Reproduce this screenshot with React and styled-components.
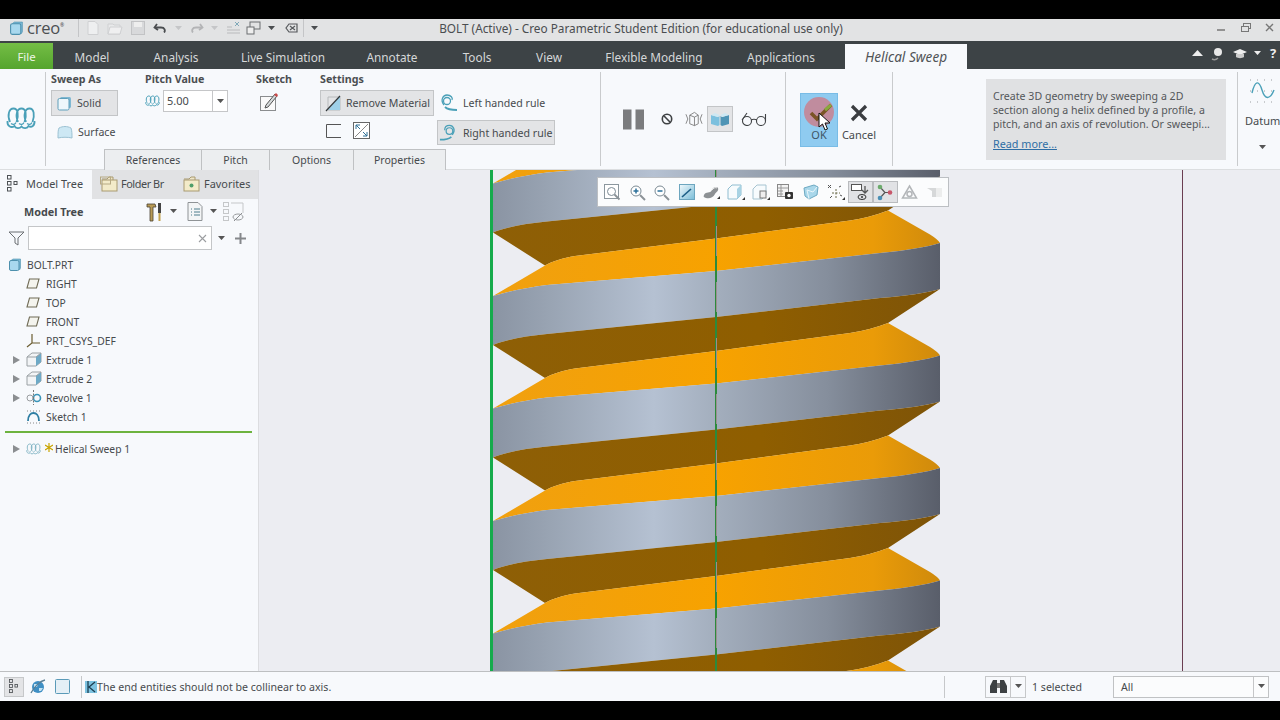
import React from 'react';
import styled, { createGlobalStyle } from 'styled-components';

const Global = createGlobalStyle`
  html, body { margin: 0; padding: 0; background: #000; }
  body { font-family: "Noto Sans", "Open Sans", sans-serif; font-size: 10.6px; color: #464a4d; }
  * { box-sizing: border-box; }
`;

const Screen = styled.div`width:1280px;height:720px;background:#000;padding-top:19px;display:flex;flex-direction:column;overflow:hidden;`;
const TitleBar = styled.div`height:22px;background:#e2e3e4;display:flex;align-items:center;position:relative;flex:none;padding-bottom:4px;`;
const Logo = styled.div`display:flex;align-items:center;gap:3px;width:79px;padding-left:9px;border-right:1px solid #c4c5c7;height:18px;`;
const LogoText = styled.span`font-family:"Open Sans",sans-serif;font-size:16.5px;color:#4b4f52;letter-spacing:-.2px;line-height:18px;`;
const LogoMark = styled.span`font-size:5px;align-self:flex-start;margin:3px 0 0 -3px;`;
const Qat = styled.div`display:flex;align-items:center;height:18px;`;
const QatSlot = styled.div`width:${p=>p.$w}px;display:flex;align-items:center;justify-content:center;`;
const QatEnd = styled.div`width:21px;height:18px;border-left:1px solid #c4c5c7;display:flex;align-items:center;justify-content:center;`;
const TitleText = styled.div`position:absolute;left:0;right:-2px;text-align:center;font-size:11.8px;color:#4a4d50;`;
const WinControls = styled.div`margin-left:auto;display:flex;align-items:center;gap:10px;padding-right:3px;`;

const TabBar = styled.div`height:28px;background:#3d4346;display:flex;flex:none;align-items:stretch;`;
const FileTab = styled.div`width:53px;margin-top:2px;padding-top:1px;background:linear-gradient(#74bd45,#55a52e);color:#eef6e6;display:flex;align-items:center;justify-content:center;font-size:11.4px;`;
const Tab = styled.div`width:${p=>p.$w}px;padding-top:3px;color:#d6d8d9;display:flex;align-items:center;justify-content:center;font-size:11.8px;`;
const ActiveTab = styled.div`width:122px;margin-left:8px;margin-top:3px;background:#f7f9fc;color:#505356;font-style:italic;font-size:13.6px;display:flex;align-items:center;justify-content:center;`;
const TabTools = styled.div`margin-left:auto;display:flex;align-items:center;gap:7px;padding:0 0 4px;color:#e6e7e8;`;
const Help = styled.span`font-weight:700;font-size:13px;color:#eee;width:10px;margin-left:2px;`;

const Ribbon = styled.div`height:101px;background:#f7f9fc;display:flex;flex:none;border-bottom:1px solid #dcdee0;`;
const RibbonSection = styled.div`width:${p=>p.$w}px;flex:none;display:flex;margin:3px 0;${p=>p.$end?'':'border-right:1px solid #c9cbcd;'}`;
const LeadIcon = styled.div`width:45px;display:flex;align-items:center;justify-content:center;padding:0 3px 0 0;margin-top:-2px;`;
const MainColumn = styled.div`flex:1;display:flex;flex-direction:column;`;
const Groups = styled.div`height:77px;flex:none;display:flex;padding-left:5px;`;
const Group = styled.div`width:${p=>p.$w}px;flex:none;display:flex;flex-direction:column;`;
const GroupTitle = styled.div`height:18px;font-weight:700;font-size:10.7px;color:#4b4e51;line-height:14px;white-space:nowrap;`;
const OptionBtn = styled.div`height:26px;width:${p=>p.$w}px;display:flex;align-items:center;white-space:nowrap;gap:${p=>p.$gap||5}px;padding-left:${p=>p.$pad||5}px;${p=>p.$on?'background:#e3e4e6;border:1px solid #c3c5c7;':'border:1px solid transparent;'}`;
const PlainOption = styled(OptionBtn)`margin-top:3px;`;
const PitchRow = styled.div`display:flex;align-items:center;margin-top:0;gap:3px;`;
const PitchBox = styled.div`width:65px;height:22px;background:#fff;border:1px solid #c5c6c8;display:flex;`;
const PitchValue = styled.div`flex:1;padding-left:3px;line-height:19px;font-size:11px;`;
const Caret = styled.div`width:15px;border-left:1px solid #c5c6c8;display:flex;align-items:center;justify-content:center;`;
const SketchSlot = styled.div`height:24px;padding-left:3px;display:flex;align-items:center;`;
const SmallRow = styled.div`display:flex;gap:12px;padding:6px 0 0 6px;align-items:center;`;
const HandedColumn = styled.div`padding-top:18px;display:flex;flex-direction:column;gap:5px;`;
const HandedOption = styled.div`height:25px;width:118px;display:flex;align-items:center;gap:5px;padding-left:1px;white-space:nowrap;${p=>p.$on?'background:#e3e4e6;border:1px solid #c3c5c7;':'border:1px solid transparent;'}`;
const SubTabs = styled.div`display:flex;flex:none;margin-left:58px;height:21px;`;
const SubTab = styled.div`width:${p=>p.$w}px;background:#eceef0;border:1px solid #bfc1c3;border-bottom:0;border-right-width:${p=>p.$last?1:0}px;display:flex;align-items:center;justify-content:center;font-size:10.5px;`;

const ControlRow = styled.div`display:flex;align-items:center;height:100%;padding:0 0 0 22px;`;
const ControlSlot = styled.div`width:${p=>p.$w}px;margin-left:${p=>p.$ml||0}px;height:26px;display:flex;align-items:center;justify-content:center;${p=>p.$on?'background:#e3e4e6;border:1px solid #c3c5c7;':''}`;
const ActionArea = styled.div`display:flex;align-items:center;padding-left:14px;gap:1px;height:100%;margin-top:1px;`;
const OkButton = styled.div`width:38px;height:54px;background:#8fcbf0;border:1px solid #79bce6;display:flex;flex-direction:column;align-items:center;padding-top:2px;position:relative;color:#3e5666;`;
const CancelButton = styled.div`width:40px;height:54px;display:flex;flex-direction:column;align-items:center;padding-top:11px;`;
const ActionLabel = styled.div`font-size:11px;line-height:16px;margin-top:${p=>p.$m}px;`;
const CursorMark = styled.div`position:absolute;left:17px;top:18px;line-height:0;`;
const InfoBox = styled.div`margin:7px 0 0 93px;width:240px;height:81px;background:#e0e1e3;padding:10px 7px 0;font-size:10.6px;line-height:14.2px;color:#54575a;`;
const ReadMore = styled.a`display:block;margin-top:5px;color:#2f6ea5;text-decoration:underline;font-size:10.8px;`;
const DatumBlock = styled.div`flex:1;display:flex;flex-direction:column;align-items:center;padding-top:6px;`;
const DatumArt = styled.div`padding-left:7px;line-height:0;`;
const DatumLabel = styled.div`margin-top:9px;padding-left:7px;font-size:11px;`;
const DatumCaret = styled.div`margin-top:17px;padding-left:6px;line-height:0;`;

const Body = styled.div`flex:1;display:flex;min-height:0;`;
const LeftPanel = styled.div`width:259px;flex:none;background:#f7f9fc;border-right:1px solid #dcdde0;display:flex;flex-direction:column;`;
const PanelTabs = styled.div`height:29px;background:#e1e2e4;display:flex;flex:none;font-size:10.9px;`;
const PanelTab = styled.div`width:${p=>p.$w}px;display:flex;align-items:center;padding-bottom:2px;gap:${p=>p.$gap||4}px;padding-left:${p=>p.$pad}px;white-space:nowrap;${p=>p.$on?'background:#f7f9fc;':''}`;
const TightLabel = styled.span`letter-spacing:-.45px;`;
const TreeHeader = styled.div`height:27px;display:flex;align-items:center;padding:0 0 2px 24px;flex:none;`;
const TreeTitle = styled.div`font-weight:700;width:122px;font-size:10.8px;`;
const HeaderTool = styled.div`display:flex;align-items:center;gap:7px;width:${p=>p.$w}px;`;
const FilterRow = styled.div`display:flex;align-items:center;height:24px;padding-left:8px;flex:none;`;
const FilterInput = styled.div`width:184px;height:24px;margin-left:3px;background:#fff;border:1px solid #c4c6c8;display:flex;align-items:center;justify-content:flex-end;padding-right:4px;`;
const FilterTail = styled.div`display:flex;align-items:center;gap:10px;margin-left:6px;`;
const Tree = styled.div`padding-top:5px;display:flex;flex-direction:column;`;
const TreeRow = styled.div`height:19px;display:flex;align-items:center;font-size:10.3px;padding-left:${p=>p.$root?8:12}px;`;
const Expander = styled.div`width:14px;line-height:0;`;
const RowIcon = styled.div`width:${p=>p.$w||20}px;display:flex;align-items:center;margin-right:${p=>p.$m??0}px;`;
const NewMark = styled.div`width:10px;line-height:0;margin-top:-3px;`;
const Rule = styled.div`height:2px;background:#6db33f;margin:5px 6px 6px 5px;`;

const Viewport = styled.div`flex:1;position:relative;overflow:hidden;background:#ecedf2;`;
const ViewTools = styled.div`position:absolute;left:338px;top:7px;width:352px;height:30px;background:#fbfcfd;border:1px solid #bcbfc3;display:flex;align-items:center;padding-left:2px;`;
const ViewTool = styled.div`width:24.8px;height:22px;display:flex;align-items:center;justify-content:center;${p=>p.$on?'background:#e1e2e5;border:1px solid #b9bbbe;':''}`;

const StatusBar = styled.div`height:30px;flex:none;background:#f7f9fc;border-top:1px solid #bdbfc1;display:flex;align-items:center;`;
const StatusToggle = styled.div`width:20px;height:20px;margin-left:4px;background:#e3e4e6;border:1px solid #c6c8ca;display:flex;align-items:center;justify-content:center;`;
const StatusIcon = styled.div`width:24px;display:flex;justify-content:center;margin-left:${p=>p.$m||0}px;`;
const Message = styled.div`margin-left:7px;padding-left:3px;height:22px;width:864px;border-left:1px solid #c6c8ca;border-right:1px solid #c6c8ca;display:flex;align-items:center;gap:0;`;
const FindGroup = styled.div`width:41px;height:22px;margin-left:40px;display:flex;border:1px solid #c6c8ca;`;
const FindIcon = styled.div`flex:1;display:flex;align-items:center;justify-content:center;`;
const SelectedText = styled.div`width:81px;margin-left:6px;`;
const FilterSelect = styled.div`width:156px;height:22px;border:1px solid #c0c2c4;display:flex;background:#fbfcfd;`;
const FilterValue = styled.div`flex:1;padding-left:7px;line-height:20px;`;
const BottomBlack = styled.div`height:19px;flex:none;background:#000;`;

const C = ({c='#555',s=7})=> <svg width={s} height={s*.6} viewBox="0 0 7 4"><path d="M0 0h7L3.5 4z" fill={c}/></svg>;
const Cube = ({s=14,fill='#a8d8ee',stroke='#4d90ad'})=> <svg width={s} height={s} viewBox="0 0 14 14"><path d="M3 2.500 L5 1h7.500v9l-1 2" fill="#7cb9d6" stroke={stroke} strokeWidth=".6"/><rect x="1.500" y="2.500" width="9.500" height="10" rx="1.500" fill={fill} stroke={stroke}/></svg>;
const Helix = ({w=30,h=23,c='#4aa0b8',sw=1.800})=> <svg width={w} height={h} viewBox="0 0 30 23" fill="none" stroke={c} strokeWidth={sw}><path d="M4 15C1 8 3 1.500 7.500 1.500S13 8 10.500 15M12 15C9 8 11 1.500 15.500 1.500S21 8 18.500 15M20 15C17 8 19 1.500 23.500 1.500S29 8 26.500 15"/><path d="M1.500 14c-.5 5 3.500 7.500 7 5 1 2.500 5 3 7 .5 2 2.500 6 2 7-.5 3 2 6.500-.5 6-5"/><path d="M5 16.500c2 1.500 4 1 5-1M13 16.500c2 1.500 4 1 5-1M21 16.500c2 1.500 4 1 5-1" strokeWidth={sw*.7}/></svg>;
const Plane = ()=> <svg width="14" height="11" viewBox="0 0 14 11"><path d="M3.500 1h9.500L10.500 10H1z" fill="#f4f4ee" stroke="#6f6a55" strokeWidth="1.100"/></svg>;
const Extrude = ()=> <svg width="16" height="15" viewBox="0 0 16 15"><path d="M1 5l5-4h9v9l-5 4H1z" fill="#f2f4f6" stroke="#9aa0a4"/><path d="M10 5l5-4v9l-5 4z" fill="#6ea9c6"/><path d="M1 5h9M10 5l5-4" stroke="#9aa0a4" fill="none"/></svg>;
const Arrow = ()=> <svg width="9" height="10" viewBox="0 0 9 10"><path d="M1 1l7 4-7 4z" fill="#8b8e91"/></svg>;
const NodeTree = ({s=1})=> <svg width={11*s} height={17*s} viewBox="0 0 11 17" fill="none" stroke="#4d5154"><rect x=".5" y=".5" width="3.500" height="3.500"/><rect x=".5" y="6.500" width="3.500" height="3.500"/><rect x=".5" y="12.500" width="3.500" height="3.500"/><rect x="7" y="6.500" width="3" height="3"/></svg>;
const Mag = ({sign})=> <svg width="17" height="17" viewBox="0 0 17 17" fill="none"><circle cx="7" cy="7" r="5" stroke="#7b8a94" fill="#fff"/><path d="M11 11l5 5" stroke="#8b9297" strokeWidth="2"/>{sign && <path d="M4.500 7h5" stroke="#2a6f9a" strokeWidth="1.500"/>}{sign==='+' && <path d="M7 4.500v5" stroke="#2a6f9a" strokeWidth="1.500"/>}</svg>;
const Folder = ({star})=> <svg width="18" height="17" viewBox="0 0 18 17"><path d="M2 4h5l2-2h4v3" fill="#efe6c8" stroke="#a99a70"/><rect x="2" y="5" width="15" height="11" fill="#f3ebc9" stroke="#a99a70"/>{star && <circle cx="9.500" cy="10.500" r="2" fill="#4f9e6a"/>}{!star && <rect x="0.500" y="2" width="10" height="7" fill="none" stroke="#b7aa84"/>}</svg>;

const band = (k) => {
  const T = `translate(0 ${112.5*k})`;
  return <g key={k} transform={T}>
    <path fill="url(#darkG)" d="M493 232.500C505 227.500 525 223.500 547 221.500L716 204.500L880 185.500Q920 182.500 940 176.500L888 210.500Q870 217.500 850 220.500L716 238.500L575 256C563 258 552 261.500 545 265.500Z"/>
    <path fill="url(#orangeG)" d="M545 265.500C552 261.500 563 258 575 256L716 238.500L850 220.500Q870 217.500 888 210.500L930 234.500Q938 239.500 940 243Q920 249 880 253L716 271L547 285C530 287 510 291 493 296Z"/>
    <path fill="url(#greyG)" d="M493 296C510 291 530 287 547 285L716 271L880 253Q920 249 940 243L940 289Q920 295 880 298L716 317L547 334C525 336 505 340 493 345Z"/>
  </g>;
};

const viewIcons = [
  <svg width="17" height="17" viewBox="0 0 17 17" fill="none"><rect x=".5" y=".5" width="14" height="14" stroke="#8b979e" fill="#fff"/><circle cx="7.500" cy="7.500" r="4" stroke="#7b8a94"/><path d="M10.500 10.500l5 5" stroke="#8b9297" strokeWidth="1.800"/></svg>,
  <Mag sign="+"/>, <Mag sign="-"/>,
  <svg width="16" height="16" viewBox="0 0 16 16"><defs><linearGradient id="rf" x1="0" y1="0" x2="1" y2="1"><stop offset="0" stopColor="#f2f9fc"/><stop offset="1" stopColor="#79bdd8"/></linearGradient></defs><rect x=".5" y=".5" width="15" height="15" fill="url(#rf)" stroke="#6da6bf"/><path d="M3 13l9-8" stroke="#1d5f86" strokeWidth="1.600"/></svg>,
  <svg width="17" height="16" viewBox="0 0 17 16"><path d="M1 11c2-4 6-1 8-5 1-3 5-4 6-2 1 3-2 4-3 6-2 4-6 5-9 4-2-1-3-1-2-3z" fill="#8d9194"/><path d="M9 6c1-2 4-3 5-2" stroke="#eee" fill="none"/><path d="M14 15h3v-3z" fill="#333"/></svg>,
  <svg width="18" height="17" viewBox="0 0 18 17"><path d="M1 5l4-4h9v10l-4 4H1z" fill="#f7fbfd" stroke="#8fbdd0"/><path d="M10 5l4-4v10l-4 4z" fill="#a8d3e4"/><path d="M15 16h3v-3z" fill="#333"/></svg>,
  <svg width="18" height="17" viewBox="0 0 18 17"><path d="M1 5l4-4h9v10l-4 4H1z" fill="#f7fbfd" stroke="#a6c4d1"/><rect x="8" y="7" width="6" height="7" fill="#eee" stroke="#777"/><path d="M15 16h3v-3z" fill="#333"/></svg>,
  <svg width="17" height="16" viewBox="0 0 17 16"><rect x=".5" y=".5" width="11" height="12" fill="#f3f3f3" stroke="#888"/><path d="M1 4h10M1 7h5M1 10h5M4 1v11" stroke="#999"/><rect x="8" y="8" width="8" height="7" rx="1" fill="#333"/><circle cx="12" cy="11.500" r="1.700" fill="#fff"/></svg>,
  <svg width="16" height="16" viewBox="0 0 16 16"><path d="M1 4l10-3 4 2-1 8-8 4-4-3z" fill="#a9d7ea" stroke="#6da9c2"/><path d="M4 6l6 2 4-5M6 15l-2-9" stroke="#e9f6fb" fill="none"/></svg>,
  <svg width="18" height="17" viewBox="0 0 18 17" fill="none" stroke="#555"><path d="M1 1l3 3M4 1L1 4" /><path d="M9 5v9M5 9h8" strokeDasharray="2 1.500" stroke="#6a6a4a"/><path d="M3 14l2-2M12 3l2-1M13 11l2 1" /><path d="M15 16h3v-3z" fill="#333" stroke="none"/></svg>,
  <svg width="18" height="18" viewBox="0 0 18 18" fill="none"><rect x=".5" y="1.500" width="10" height="6" fill="#fff" stroke="#555"/><path d="M14 3v6M11 7l3 3 3-3" stroke="#555" strokeWidth="1.300"/><ellipse cx="11" cy="14" rx="4" ry="2.500" stroke="#333"/><circle cx="11" cy="14" r="1" fill="#333"/></svg>,
  <svg width="16" height="17" viewBox="0 0 16 17" fill="none"><path d="M3 3l5 5.500-5 5.500M8 8.500h5" stroke="#555" strokeWidth="1.200"/><circle cx="3" cy="3" r="2.300" fill="#6cab6c"/><circle cx="13" cy="8.500" r="2.300" fill="#c7566a"/><circle cx="3" cy="14" r="2.300" fill="#4a8fb5"/></svg>,
  <svg width="17" height="16" viewBox="0 0 17 16" fill="none" stroke="#b3b6b9" strokeWidth="1.500"><path d="M8.500 2L15.500 14h-14z"/><circle cx="8.500" cy="10" r="2.500"/></svg>,
  <svg width="16" height="12" viewBox="0 0 16 12"><path d="M0 2h15v9H5V5z" fill="#d6d8d9"/><path d="M9 2h6v9H9z" fill="#eceded"/></svg>,
];

export default function App() {
  return (
    <Screen>
      <Global/>
      <TitleBar>
        <Logo>
          <Cube s={15}/>
          <LogoText>creo</LogoText>
          <LogoMark>®</LogoMark>
        </Logo>
        <Qat>
          <QatSlot $w={28}><svg width="12" height="14" viewBox="0 0 12 14"><path d="M1 .5h7l3 3v10H1z" fill="#eeeff0" stroke="#cfd0d2"/></svg></QatSlot>
          <QatSlot $w={16}><svg width="16" height="14" viewBox="0 0 16 14"><path d="M1 3h5l1 1h6v9H1z" fill="#e8e9ea" stroke="#cfd0d2"/><path d="M3 6h12l-2 7H1z" fill="#efeff0" stroke="#cfd0d2"/></svg></QatSlot>
          <QatSlot $w={30}><svg width="14" height="14" viewBox="0 0 14 14"><rect x=".5" y=".5" width="13" height="13" fill="#d8d9db" stroke="#c2c3c5"/><rect x="3" y="1" width="8" height="5" fill="#eee"/></svg></QatSlot>
          <QatSlot $w={14}><svg width="14" height="10" viewBox="0 0 14 10" fill="none" stroke="#4a4d50" strokeWidth="1.800"><path d="M4 1L1.500 4.500 5 7"/><path d="M2 4.500h6c4 0 4.500 3.500 3 5"/></svg></QatSlot>
          <QatSlot $w={22}><C c="#c5c6c8"/></QatSlot>
          <QatSlot $w={16}><svg width="14" height="10" viewBox="0 0 14 10" fill="none" stroke="#b3b4b6" strokeWidth="1.800"><path d="M10 1l2.500 3.500L9 7"/><path d="M12 4.500H6C2 4.500 1.500 8 3 9.500"/></svg></QatSlot>
          <QatSlot $w={18}><C c="#c5c6c8"/></QatSlot>
          <QatSlot $w={20}><svg width="15" height="14" viewBox="0 0 15 14" fill="none" stroke="#b9babc"><path d="M1 6h5M1 9h13M1 12h13"/><path d="M9 1l4 4M13 1l-4 4" stroke="#7fa8b8"/></svg></QatSlot>
          <QatSlot $w={20}><svg width="15" height="14" viewBox="0 0 15 14" fill="none" stroke="#6b6e70"><rect x="4" y="1" width="10" height="7"/><rect x="1" y="6" width="7" height="7" fill="#eee"/></svg></QatSlot>
          <QatSlot $w={16}><C c="#4a4d50"/></QatSlot>
          <QatSlot $w={24}><svg width="13" height="10" viewBox="0 0 13 10" fill="none" stroke="#56595c" strokeWidth="1.200"><path d="M4 1L1 5l3 4h8V1zM5 3l5 4M10 3L5 7"/></svg></QatSlot>
          <QatEnd><C c="#4a4d50"/></QatEnd>
        </Qat>
        <TitleText>BOLT (Active) - Creo Parametric Student Edition (for educational use only)</TitleText>
        <WinControls>
          <svg width="14" height="14" viewBox="0 0 14 14"><path d="M2 9h8" stroke="#777" strokeWidth="1.500"/></svg>
          <svg width="14" height="14" viewBox="0 0 14 14" fill="none" stroke="#777"><rect x="4.500" y="2.500" width="7" height="5"/><rect x="2.500" y="5.500" width="7" height="5" fill="#e2e3e4"/></svg>
          <svg width="14" height="14" viewBox="0 0 14 14" fill="none" stroke="#777" strokeWidth="1.400"><path d="M3 3l7 7M10 3l-7 7"/></svg>
        </WinControls>
      </TitleBar>

      <TabBar>
        <FileTab>File</FileTab>
        <Tab $w={78}>Model</Tab>
        <Tab $w={90}>Analysis</Tab>
        <Tab $w={124}>Live Simulation</Tab>
        <Tab $w={94}>Annotate</Tab>
        <Tab $w={76}>Tools</Tab>
        <Tab $w={68}>View</Tab>
        <Tab $w={142}>Flexible Modeling</Tab>
        <Tab $w={112}>Applications</Tab>
        <ActiveTab>Helical Sweep</ActiveTab>
        <TabTools>
          <svg width="11" height="7" viewBox="0 0 11 7"><path d="M5.500 0L11 6H0z" fill="#eee"/></svg>
          <svg width="16" height="15" viewBox="0 0 16 15"><circle cx="8" cy="6" r="4" fill="#e8e8e8"/><path d="M2 13c2 1 4 1 6-1" stroke="#999" fill="none" strokeWidth="1.500"/></svg>
          <svg width="14" height="11" viewBox="0 0 14 11"><path d="M7 1l7 3-7 3-7-3z" fill="#eee"/><path d="M3 6v3c2 1.500 6 1.500 8 0V6z" fill="#ccc"/></svg>
          <C c="#eee"/>
          <Help>?</Help>
        </TabTools>
      </TabBar>

      <Ribbon>
        <RibbonSection $w={46}>
          <LeadIcon><Helix/></LeadIcon>
        </RibbonSection>
        <RibbonSection $w={555}>
          <MainColumn>
            <Groups>
              <Group $w={94}>
                <GroupTitle>Sweep As</GroupTitle>
                <OptionBtn $on $w={67}>
                  <svg width="15" height="15" viewBox="0 0 15 15"><rect x="3" y="1" width="11" height="11" rx="1.500" fill="#7fb8d2"/><rect x="1" y="2.500" width="11" height="11.500" rx="1.500" fill="#eef7fb" stroke="#5f9fbb"/></svg>
                  <span>Solid</span>
                </OptionBtn>
                <PlainOption $w={90}>
                  <svg width="16" height="14" viewBox="0 0 16 14"><path d="M1 13c0-5 0-8 1-10 4-2 8-2 12 0 1 3 1 6 1 10-4-1-10-1-14 0z" fill="#cde8f4" stroke="#9cc2d3"/></svg>
                  <span>Surface</span>
                </PlainOption>
              </Group>
              <Group $w={111}>
                <GroupTitle>Pitch Value</GroupTitle>
                <PitchRow>
                  <Helix w={15} h={12} sw={2}/>
                  <PitchBox>
                    <PitchValue>5.00</PitchValue>
                    <Caret><C/></Caret>
                  </PitchBox>
                </PitchRow>
              </Group>
              <Group $w={64}>
                <GroupTitle>Sketch</GroupTitle>
                <SketchSlot>
                  <svg width="20" height="20" viewBox="0 0 20 20"><rect x="1.500" y="4.500" width="15" height="14" fill="#fafafa" stroke="#8b8d8f"/><path d="M7 13L16 2l2 2-9 11-3 1z" fill="#d6dadb" stroke="#555"/><path d="M15 3l2-2 2 2-1 2z" fill="#c94a4a"/></svg>
                </SketchSlot>
              </Group>
              <Group $w={117}>
                <GroupTitle>Settings</GroupTitle>
                <OptionBtn $on $w={114} $pad={4} $gap={3}>
                  <svg width="18" height="18" viewBox="0 0 18 18"><path d="M3 3h12v13H3z" fill="none" stroke="#b7babc"/><path d="M3 16L15 2v14z" fill="#9ed0e8"/><path d="M1 17L15 2" stroke="#33383b" strokeWidth="1.200"/></svg>
                  <span>Remove Material</span>
                </OptionBtn>
                <SmallRow>
                  <svg width="15" height="14" viewBox="0 0 15 14" fill="none" stroke="#555"><path d="M15 .5H.5v13H15"/></svg>
                  <svg width="17" height="17" viewBox="0 0 17 17" fill="none"><rect x=".5" y=".5" width="16" height="16" stroke="#666" fill="#fff"/><path d="M2 15L15 2" stroke="#888"/><path d="M3 3h4M3 3v4M3 3l4 4M14 14h-4M14 14v-4M14 14l-4-4" stroke="#2f6f95"/></svg>
                </SmallRow>
              </Group>
              <HandedColumn>
                <HandedOption>
                  <svg width="19" height="19" viewBox="0 0 19 19" fill="none" stroke="#4aa0b8" strokeWidth="1.300"><path d="M5 12C1 7 4 2 8 2s6 3 5 5"/><circle cx="8" cy="8" r="3.500"/><path d="M6 14c3 3 7 3 12 3" strokeWidth="1.800"/></svg>
                  <span>Left handed rule</span>
                </HandedOption>
                <HandedOption $on>
                  <svg width="19" height="19" viewBox="0 0 20 19" fill="none" stroke="#4aa0b8" strokeWidth="1.300"><path d="M14 12c4-5 1-10-3-10S6 4 6 7"/><circle cx="11" cy="8" r="3.500"/><path d="M13 14c-3 3-7 3-12 3" strokeWidth="1.800"/></svg>
                  <span>Right handed rule</span>
                </HandedOption>
              </HandedColumn>
            </Groups>
            <SubTabs>
              <SubTab $w={97}>References</SubTab>
              <SubTab $w={68}>Pitch</SubTab>
              <SubTab $w={84}>Options</SubTab>
              <SubTab $w={93} $last>Properties</SubTab>
            </SubTabs>
          </MainColumn>
        </RibbonSection>
        <RibbonSection $w={185}>
          <ControlRow>
            <ControlSlot $w={21}><svg width="21" height="21" viewBox="0 0 21 21"><rect width="8.500" height="20" y=".5" fill="#7b7c7e"/><rect x="12.500" y=".5" width="8.500" height="20" fill="#7b7c7e"/></svg></ControlSlot>
            <ControlSlot $w={36} $ml={5}><svg width="12" height="12" viewBox="0 0 12 12" fill="none" stroke="#3f4244" strokeWidth="1.600"><circle cx="6" cy="6" r="4.700"/><path d="M2.800 2.800l6.400 6.400"/></svg></ControlSlot>
            <ControlSlot $w={18}><svg width="19" height="16" viewBox="0 0 19 16" fill="none" stroke="#777" strokeWidth=".9"><path d="M5 4l5-3 4 3v9l-4 2-5-2zM5 4l5 2 4-2M10 6v9M1 3l2 5-2 5M18 3l-2 5 2 5"/></svg></ControlSlot>
            <ControlSlot $w={26} $ml={4} $on><svg width="18" height="13" viewBox="0 0 18 13"><path d="M0 2l7 2 1.500-1v9L7 13 0 11z" fill="#7cc0de"/><path d="M18 2l-7 2-1.500-1v9L11 13l7-2z" fill="#4f94b5"/><path d="M0 2l4-2 4.500 2L7 4zM18 2l-4-2-4.500 2L11 4z" fill="#cde8f3"/></svg></ControlSlot>
            <ControlSlot $w={41}><svg width="26" height="14" viewBox="0 0 26 14" fill="none" stroke="#3f4244" strokeWidth="1.100"><circle cx="6" cy="9" r="4.500"/><circle cx="20" cy="9" r="4.500"/><path d="M10 8c2-1 4-1 6 0M1 8L6 1M24.500 9V2"/></svg></ControlSlot>
          </ControlRow>
        </RibbonSection>
        <RibbonSection $w={107}>
          <ActionArea>
            <OkButton>
              <svg width="32" height="32" viewBox="0 0 32 32"><circle cx="16" cy="16" r="15" fill="#c08c9e"/><path d="M8 17l6 6L28 9" fill="none" stroke="#7a5426" strokeWidth="3.600"/><path d="M22 14l6-5" stroke="#8aa83c" strokeWidth="3"/></svg>
              <ActionLabel $m={-1}>OK</ActionLabel>
              <CursorMark>
                <svg width="14" height="20" viewBox="0 0 14 20"><path d="M1 1v14l3.500-3 2.500 6 2.500-1-2.500-6H12z" fill="#fff" stroke="#111"/></svg>
              </CursorMark>
            </OkButton>
            <CancelButton>
              <svg width="20" height="18" viewBox="0 0 20 18"><path d="M3 2l14 14M17 2L3 16" stroke="#3a3d40" strokeWidth="3.200"/></svg>
              <ActionLabel $m={5}>Cancel</ActionLabel>
            </CancelButton>
          </ActionArea>
        </RibbonSection>
        <RibbonSection $w={345}>
          <InfoBox>
            Create 3D geometry by sweeping a 2D<br/>
            section along a helix defined by a profile, a<br/>
            pitch, and an axis of revolution. Or sweepi...
            <ReadMore>Read more...</ReadMore>
          </InfoBox>
        </RibbonSection>
        <RibbonSection $w={42} $end>
          <DatumBlock>
            <DatumArt><svg width="30" height="26" viewBox="0 0 30 26" fill="none"><path d="M4 15C7 2 11 2 14 12s8 10 12 0" stroke="#4aa0b8" strokeWidth="1.400"/><path d="M2 2h26M2 24h26M2 13h26" stroke="#9a9da0" strokeDasharray="1 6"/></svg></DatumArt>
            <DatumLabel>Datum</DatumLabel>
            <DatumCaret><C/></DatumCaret>
          </DatumBlock>
        </RibbonSection>
      </Ribbon>

      <Body>
        <LeftPanel>
          <PanelTabs>
            <PanelTab $w={92} $on $pad={7} $gap={8}><NodeTree/><span>Model Tree</span></PanelTab>
            <PanelTab $w={79} $pad={8} $gap={3}><Folder/><TightLabel>Folder Br</TightLabel></PanelTab>
            <PanelTab $w={87} $pad={11} $gap={4}><Folder star/><span>Favorites</span></PanelTab>
          </PanelTabs>
          <TreeHeader>
            <TreeTitle>Model Tree</TreeTitle>
            <HeaderTool $w={41}>
              <svg width="17" height="20" viewBox="0 0 17 20"><path d="M1 2h8l1 3H7v14H4V5H1z" fill="#b89a55" stroke="#4a4234" strokeWidth=".8"/><rect x="12" y="1" width="3" height="10" fill="#444"/><rect x="12.500" y="11" width="2" height="8" fill="#c2a24c"/></svg>
              <C/>
            </HeaderTool>
            <HeaderTool $w={36}>
              <svg width="16" height="19" viewBox="0 0 16 19" fill="none"><path d="M1 .5h10l4 4v14H1z" fill="#f3f5f6" stroke="#8f9396"/><path d="M4 7h1M7 7h6M4 10h1M7 10h6M4 13h1M7 13h6" stroke="#4d7c8c"/></svg>
              <C/>
            </HeaderTool>
            <svg width="21" height="20" viewBox="0 0 21 20" fill="none" stroke="#c5c7c9"><rect x=".5" y=".5" width="5" height="4"/><rect x=".5" y="7.500" width="5" height="4"/><rect x=".5" y="14.500" width="5" height="4"/><path d="M8 1h12v10"/><ellipse cx="15" cy="15" rx="5" ry="3" stroke="#9a9da0"/><path d="M11 19l8-8" stroke="#8a8d90"/></svg>
          </TreeHeader>
          <FilterRow>
            <svg width="17" height="15" viewBox="0 0 17 15" fill="none" stroke="#6b6f72"><path d="M1 1h15l-6 6v7l-3-2V7z"/></svg>
            <FilterInput>
              <svg width="9" height="9" viewBox="0 0 9 9" stroke="#9b9da0" strokeWidth="1.100"><path d="M1 1l7 7M8 1L1 8"/></svg>
            </FilterInput>
            <FilterTail>
              <C c="#555"/>
              <svg width="11" height="11" viewBox="0 0 11 11"><path d="M5.500 0v11M0 5.500h11" stroke="#85888b" strokeWidth="2"/></svg>
            </FilterTail>
          </FilterRow>
          <Tree>
            <TreeRow $root><RowIcon $w={19}><Cube s={14}/></RowIcon>BOLT.PRT</TreeRow>
            <TreeRow><Expander/><RowIcon><Plane/></RowIcon>RIGHT</TreeRow>
            <TreeRow><Expander/><RowIcon><Plane/></RowIcon>TOP</TreeRow>
            <TreeRow><Expander/><RowIcon><Plane/></RowIcon>FRONT</TreeRow>
            <TreeRow><Expander/><RowIcon><svg width="15" height="15" viewBox="0 0 15 15" fill="none" stroke="#6b5c30" strokeWidth="1.200"><path d="M6 1v9l-5 4M6 10h8"/></svg></RowIcon>PRT_CSYS_DEF</TreeRow>
            <TreeRow><Expander><Arrow/></Expander><RowIcon><Extrude/></RowIcon>Extrude 1</TreeRow>
            <TreeRow><Expander><Arrow/></Expander><RowIcon><Extrude/></RowIcon>Extrude 2</TreeRow>
            <TreeRow><Expander><Arrow/></Expander><RowIcon><svg width="16" height="15" viewBox="0 0 16 15" fill="none"><circle cx="11" cy="8" r="3.500" stroke="#3a94b8" strokeWidth="1.600"/><circle cx="4" cy="8" r="3" stroke="#9a9da0"/><path d="M7.500 0v15" stroke="#777" strokeDasharray="2 1.500"/></svg></RowIcon>Revolve 1</TreeRow>
            <TreeRow><Expander/><RowIcon><svg width="15" height="15" viewBox="0 0 15 15" fill="none"><path d="M2 12c0-6 3-8 5.500-8S13 6 13 12" stroke="#2e7ea3" strokeWidth="1.800"/><path d="M1 2h13M1 14h13" stroke="#888" strokeDasharray="1 2"/></svg></RowIcon>Sketch 1</TreeRow>
          </Tree>
          <Rule/>
          <TreeRow><Expander><Arrow/></Expander><RowIcon $w={15} $m={4}><Helix w={15} h={12} c="#6fa9bb" sw={1.600}/></RowIcon><NewMark><svg width="8" height="9" viewBox="0 0 8 9" stroke="#c9a400" strokeWidth="1.200"><path d="M4 0v9M0 2l8 5M8 2L0 7"/></svg></NewMark>Helical Sweep 1</TreeRow>
        </LeftPanel>

        <Viewport>
          <svg width="1021" height="501" viewBox="259 170 1021 501" style={{display:'block'}}>
            <defs>
              <linearGradient id="greyG" gradientUnits="userSpaceOnUse" x1="493" x2="940" y1="0" y2="0">
                <stop offset="0" stopColor="#8a94a3"/><stop offset=".12" stopColor="#98a3b2"/><stop offset=".36" stopColor="#b5c1d2"/><stop offset=".5" stopColor="#a3aebd"/><stop offset=".75" stopColor="#858e9c"/><stop offset="1" stopColor="#595e6a"/>
              </linearGradient>
              <linearGradient id="orangeG" gradientUnits="userSpaceOnUse" x1="493" x2="940" y1="0" y2="0">
                <stop offset="0" stopColor="#f0a010"/><stop offset=".5" stopColor="#f7a200"/><stop offset=".85" stopColor="#ea9b08"/><stop offset="1" stopColor="#cf8a0c"/>
              </linearGradient>
              <linearGradient id="darkG" gradientUnits="userSpaceOnUse" x1="493" x2="940" y1="0" y2="0">
                <stop offset="0" stopColor="#8e5f06"/><stop offset=".6" stopColor="#8f5e00"/><stop offset="1" stopColor="#7e5408"/>
              </linearGradient>
            </defs>
            {[-2,-1,0,1,2,3,4].map(band)}
            <path d="M716 170V671" stroke="#2c8a3c" strokeWidth="2"/>
            <path d="M716.500 170V671" stroke="#9a8f8f" strokeWidth="1" strokeDasharray="30 26"/>
            <path d="M491.500 170V671" stroke="#16ab4c" strokeWidth="3"/>
            <path d="M1182.500 170V671" stroke="#6a3e52" strokeWidth="1"/>
          </svg>
          <ViewTools>
            {viewIcons.map((ic,i)=><ViewTool key={i} $on={i===10||i===11}>{ic}</ViewTool>)}
          </ViewTools>
        </Viewport>
      </Body>

      <StatusBar>
        <StatusToggle><NodeTree s={.85}/></StatusToggle>
        <StatusIcon $m={2}><svg width="16" height="16" viewBox="0 0 16 16"><circle cx="8" cy="8" r="6" fill="#3f8fc4"/><path d="M4 5h4l-1 3H4zM9 9h4l-2 3H9z" fill="#c4e2f2"/><path d="M1 14C4 8 10 2 15 1" stroke="#5a7f95" fill="none" strokeWidth="1.300"/></svg></StatusIcon>
        <StatusIcon><svg width="15" height="15" viewBox="0 0 15 15"><rect x=".5" y=".5" width="14" height="14" rx="1" fill="#e4eff6" stroke="#5a9ab8"/></svg></StatusIcon>
        <Message>
          <svg width="12" height="12" viewBox="0 0 12 12"><rect width="12" height="12" fill="#7cc2e0"/><path d="M3 0v12M10 1L4 6l6 5" stroke="#1d3f52" strokeWidth="1.300" fill="none"/></svg>
          <span>The end entities should not be collinear to axis.</span>
        </Message>
        <FindGroup>
          <FindIcon><svg width="17" height="15" viewBox="0 0 17 15"><path d="M3 1h4v13H0V7zM10 1h4l3 6v7h-7z" fill="#3d4144"/><rect x="7" y="4" width="3" height="5" fill="#777"/></svg></FindIcon>
          <Caret><C/></Caret>
        </FindGroup>
        <SelectedText>1 selected</SelectedText>
        <FilterSelect>
          <FilterValue>All</FilterValue>
          <Caret><C/></Caret>
        </FilterSelect>
      </StatusBar>
      <BottomBlack/>
    </Screen>
  );
}
